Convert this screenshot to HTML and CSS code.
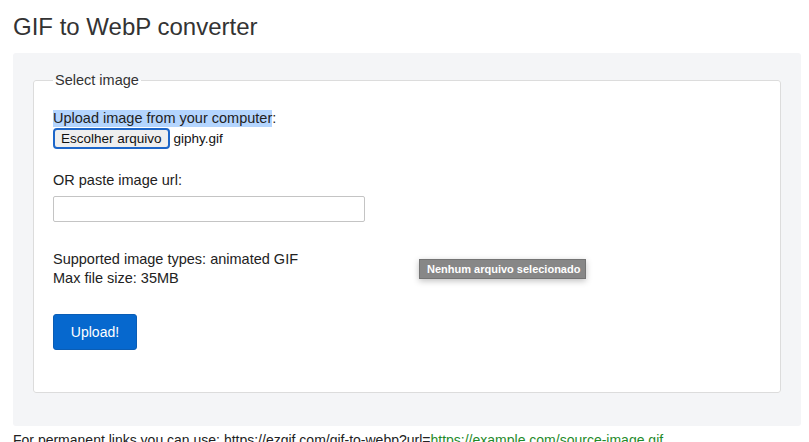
FILE: index.html
```html
<!DOCTYPE html>
<html lang="en">
<head>
    <meta charset="UTF-8">
    <meta name="viewport" content="width=device-width, initial-scale=1.0">
    <title>GIF to WebP converter</title>
    <link rel="stylesheet" href="styles.css">
</head>
<body>

    <div class="page">
        <h1>GIF to WebP converter</h1>

        <div class="panel">
            <form>
                <fieldset>
                    <legend>Select image</legend>

                    <div class="upload-label"><span class="selected">Upload image from your computer</span>:</div>
                    <div class="file-row">
                        <button type="button" class="file-btn">Escolher arquivo</button>
                        <span class="file-name">giphy.gif</span>
                    </div>

                    <div class="url-label">OR paste image url:</div>
                    <input type="text" class="url-input">

                    <div class="info">
                        Supported image types: animated GIF<br>
                        Max file size: 35MB
                    </div>

                    <button type="button" class="upload-btn">Upload!</button>
                </fieldset>
            </form>

            <!-- tooltip do input de arquivo -->
            <div class="tooltip">Nenhum arquivo selecionado</div>
        </div>

        <p class="perma">For permanent links you can use: https://ezgif.com/gif-to-webp?url=<a href="#">https://example.com/source-image.gif</a></p>
    </div>

</body>
</html>
```

FILE: styles.css
```css
body, html {
    margin: 0;
    padding: 0;
    font-family: "Liberation Sans", Arial, sans-serif;
    background-color: #fff;
    color: #222;
}

.page {
    padding: 0 8px 0 13px;
}

h1 {
    font-size: 24px;
    font-weight: normal;
    color: #333;
    line-height: 28px;
    margin: 13px 0 12px;
}

.panel {
    position: relative;
    background-color: #f4f5f7;
    border-radius: 3px;
    padding: 19px 20px 33px 20px;
}

form {
    margin: 0;
}

fieldset {
    margin: 0;
    background-color: #fff;
    border: 1px solid #dcdcdc;
    border-radius: 3px;
    padding: 22px 19px 42px 19px;
    font-size: 14.5px;
}

legend {
    padding: 0 2px;
    font-size: 14.5px;
    line-height: 16px;
    color: #333;
}

.upload-label {
    line-height: 17px;
}

.selected {
    background-color: #b4d5fe;
    display: inline-block;
}

.file-row {
    display: flex;
    align-items: center;
    margin-top: 1px;
    height: 21px;
}

.file-btn {
    height: 21px;
    box-sizing: border-box;
    font-family: "Liberation Sans", Arial, sans-serif;
    font-size: 13.5px;
    color: #111;
    background-color: #efefef;
    border: 2px solid #1d66c9;
    border-radius: 4px;
    padding: 0 6px;
    line-height: 15px;
}

.file-name {
    font-size: 13.5px;
    margin-left: 4px;
    color: #111;
}

.url-label {
    line-height: 17px;
    margin-top: 23px;
}

.url-input {
    display: block;
    box-sizing: border-box;
    width: 312px;
    height: 26px;
    margin-top: 7px;
    border: 1px solid #c4c4c4;
    border-radius: 2px;
    padding: 2px 6px;
    font-size: 14px;
}

.info {
    line-height: 19px;
    margin-top: 28px;
}

.upload-btn {
    display: block;
    margin-top: 26px;
    width: 84px;
    height: 36px;
    background-color: #0668ce;
    border: 1px solid #0a5db5;
    border-radius: 3px;
    color: #fff;
    font-family: "Liberation Sans", Arial, sans-serif;
    font-size: 14px;
    padding: 0;
}

.tooltip {
    position: absolute;
    left: 406px;
    top: 206px;
    width: 167px;
    height: 20px;
    box-sizing: border-box;
    background-color: #878787;
    border: 1px solid #747474;
    color: #fff;
    font-size: 11px;
    font-weight: bold;
    line-height: 18px;
    padding: 0 7px;
    box-shadow: 0 2px 6px rgba(0, 0, 0, 0.25);
    white-space: nowrap;
}

.perma {
    font-size: 14px;
    margin: 6px 0 0;
    line-height: 17px;
    color: #222;
}

.perma a {
    color: #1f8a2a;
    text-decoration: none;
}
```
